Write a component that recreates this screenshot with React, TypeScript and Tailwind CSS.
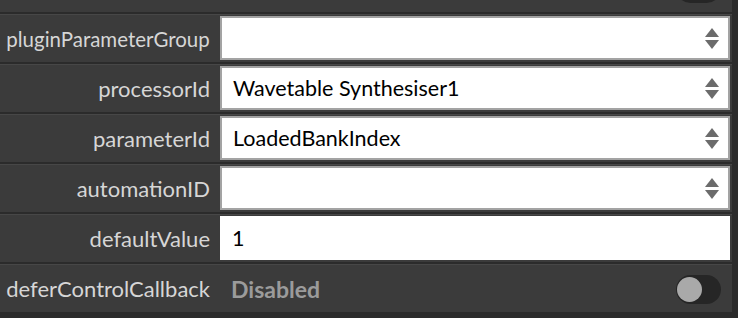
import React from "react";

const font = { fontFamily: "Lato, 'Noto Sans', sans-serif" };

function Stepper() {
  return (
    <div className="flex flex-col items-center gap-[3px] mr-[9px]">
      <div className="w-0 h-0 border-l-[7px] border-r-[7px] border-b-[9px] border-l-transparent border-r-transparent border-b-[#6b6b6b]" />
      <div className="w-0 h-0 border-l-[7px] border-r-[7px] border-t-[9px] border-l-transparent border-r-transparent border-t-[#6b6b6b]" />
    </div>
  );
}

function Row({ label, squeeze, children }: { label: string; squeeze?: boolean; children: React.ReactNode }) {
  return (
    <div className="flex h-[48px] mb-[2px] border-t border-[#474747] bg-[#3b3b3b] mr-[6px]">
      <div className="w-[220px] shrink-0 flex items-center justify-end pr-[10px] text-[22px] text-[#d6d6d6] whitespace-nowrap">
        <span className={squeeze ? "inline-block origin-right scale-x-[0.93]" : "inline-block"}>{label}</span>
      </div>
      <div className="flex-1 flex items-start pt-[1px] pr-[2px]">{children}</div>
    </div>
  );
}

function Combo({ value }: { value: string }) {
  return (
    <div className="w-full h-[44px] bg-white border-2 border-[#a3a3a3] flex items-center justify-between pl-[11px]">
      <span className="text-[21.5px] text-black">{value}</span>
      <Stepper />
    </div>
  );
}

export default function App() {
  return (
    <div className="w-[738px] h-[318px] bg-[#2b2b2b] overflow-hidden" style={font}>
      <div className="h-[12px] mb-[2px] bg-[#3b3b3b] mr-[6px] overflow-hidden flex justify-end pr-[11px]">
        <div className="w-[45px] h-[29px] -mt-[26px] rounded-full bg-[#262626]" />
      </div>
      <Row label="pluginParameterGroup" squeeze>
        <Combo value="" />
      </Row>
      <Row label="processorId">
        <Combo value="Wavetable Synthesiser1" />
      </Row>
      <Row label="parameterId">
        <Combo value="LoadedBankIndex" />
      </Row>
      <Row label="automationID">
        <Combo value="" />
      </Row>
      <Row label="defaultValue">
        <div className="w-full h-[44px] bg-white flex items-center pl-[12px]">
          <span className="text-[21.5px] text-black">1</span>
        </div>
      </Row>
      <Row label="deferControlCallback">
        <div className="w-full h-[46px] flex items-center justify-between pl-[11px] pr-[9px]">
          <span className="text-[23px] font-bold text-[#9b9b9b]">Disabled</span>
          <div className="w-[45px] h-[29px] rounded-full bg-[#262626] flex items-center pl-[1px]">
            <div className="w-[25px] h-[25px] rounded-full bg-[#a9a9a9]" />
          </div>
        </div>
      </Row>
    </div>
  );
}
